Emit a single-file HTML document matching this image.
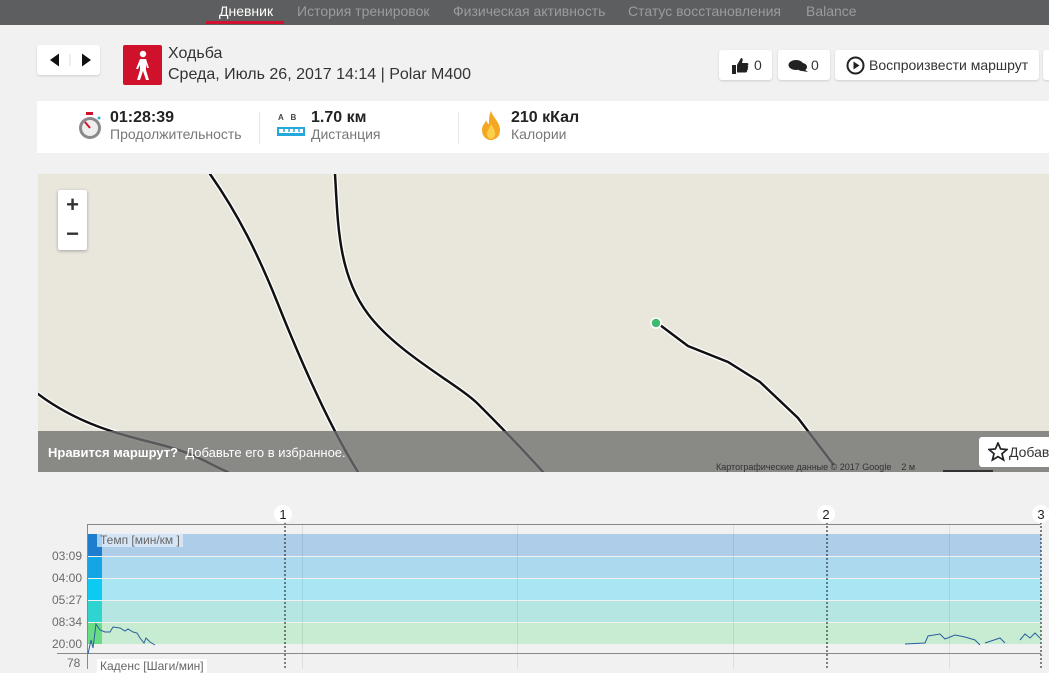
<!DOCTYPE html>
<html><head><meta charset="utf-8"><style>
*{margin:0;padding:0;box-sizing:border-box}
body{width:1049px;height:669px;overflow:hidden;background:#f1f1f1;font-family:"Liberation Sans",sans-serif;position:relative;color:#333}
.abs{position:absolute}
.nav{left:0;top:0;width:1049px;height:25px;background:#5d5e5f}
.nav span{position:absolute;top:3px;font-size:14px;color:#9b9c9d}
.btn{background:#fff;border-radius:3px;box-shadow:0 1px 2px rgba(0,0,0,.15);height:30px;top:50px;font-size:14px;color:#333}
.lbl{font-size:12px;color:#6b6b6b}
</style></head><body>
<div class="abs nav">
<span style="left:219px;color:#fff">Дневник</span>
<div class="abs" style="left:206px;top:21px;width:78px;height:3px;background:#d2102f"></div>
<span style="left:297px">История тренировок</span>
<span style="left:453px">Физическая активность</span>
<span style="left:628px">Статус восстановления</span>
<span style="left:806px">Balance</span>
</div>
<div class="abs btn" style="left:37px;top:45px;width:63px;height:30px">
<svg width="63" height="30"><path d="M13 15l9-6.5v13z" fill="#111"/><path d="M54 15l-9-6.5v13z" fill="#111"/><line x1="33" y1="9" x2="33" y2="21" stroke="#ddd"/></svg>
</div>
<div class="abs" style="left:123px;top:45px;width:39px;height:40px;background:#d0112b;border-radius:2px">
<svg width="39" height="40"><circle cx="20" cy="9" r="3.2" fill="#fff"/><path d="M17 14h6l3 9h-2l-1-4v6l3 10h-3l-3-9-3 9h-3l3-10v-5l-2 4h-2z" fill="#fff"/></svg>
</div>
<div class="abs" style="left:168px;top:45px;font-size:16px;color:#333">Ходьба</div>
<div class="abs" style="left:168px;top:66px;font-size:16px;color:#333">Среда, Июль 26, 2017 14:14 | Polar M400</div>
<div class="abs btn" style="left:719px;width:53px"><svg class="abs" style="left:12px;top:7px" width="18" height="17"><path d="M1 8h4v9H1z M6 8l4-7c2 0 2 2 1 5h5c1.5 0 2 2 0.5 2.5 1 .5 1 2 0 2.5 1 .5 .5 2-.5 2 .5 1 0 2.5-1.5 2.5H6z" fill="#222"/></svg><span class="abs" style="left:35px;top:7px">0</span></div>
<div class="abs btn" style="left:778px;width:52px"><svg class="abs" style="left:10px;top:9px" width="20" height="13"><ellipse cx="8" cy="6" rx="7.5" ry="5" fill="#222"/><ellipse cx="14" cy="8" rx="5" ry="4" fill="#222"/><path d="M16 10l4 3-6-1z" fill="#222"/></svg><span class="abs" style="left:33px;top:7px">0</span></div>
<div class="abs btn" style="left:835px;width:204px"><svg class="abs" style="left:11px;top:6px" width="19" height="19"><circle cx="9.5" cy="9.5" r="8" fill="none" stroke="#222" stroke-width="2"/><path d="M7.5 5.5v8l6-4z" fill="#222"/></svg><span class="abs" style="left:34px;top:7px">Воспроизвести маршрут</span></div>
<div class="abs btn" style="left:1043px;width:20px"></div>
<div class="abs" style="left:37px;top:101px;width:1012px;height:52px;background:#fff"></div>
<svg class="abs" style="left:76px;top:110px" width="28" height="32"><rect x="10" y="2" width="7" height="3" fill="#d0112b"/><circle cx="14" cy="18" r="11" fill="#8a8a8a"/><circle cx="14" cy="18" r="8" fill="#eee"/><line x1="14" y1="18" x2="9" y2="12" stroke="#d0112b" stroke-width="2"/><circle cx="23" cy="8" r="1.5" fill="#3ab0e0"/></svg>
<div class="abs" style="left:110px;top:109px;font-size:16px;font-weight:bold;color:#222">01:28:39</div>
<div class="abs" style="left:110px;top:126px;font-size:14px;color:#777">Продолжительность</div>
<div class="abs" style="left:259px;top:112px;width:1px;height:32px;background:#e6e6e6"></div>
<div class="abs" style="left:278px;top:113px;font-size:8px;font-weight:bold;color:#444">A&nbsp;&nbsp;&nbsp;B</div>
<svg class="abs" style="left:277px;top:127px" width="28" height="10"><rect width="28" height="9" fill="#23a8dc"/><rect x="2" y="2" width="24" height="4" fill="#fff"/><g stroke="#23a8dc" stroke-width="1.5"><line x1="7" y1="2" x2="7" y2="5"/><line x1="12" y1="2" x2="12" y2="5"/><line x1="17" y1="2" x2="17" y2="5"/><line x1="22" y1="2" x2="22" y2="5"/></g></svg>
<div class="abs" style="left:311px;top:109px;font-size:16px;font-weight:bold;color:#222">1.70 км</div>
<div class="abs" style="left:311px;top:126px;font-size:14px;color:#777">Дистанция</div>
<div class="abs" style="left:458px;top:112px;width:1px;height:32px;background:#e6e6e6"></div>
<svg class="abs" style="left:480px;top:110px" width="22" height="32"><path d="M11 1c2 7 9 11 9 19 0 6-4 10-9 10S2 26 2 20c0-5 3-6 4-10 1 3 2 4 3 4 0-5 0-9 2-13z" fill="#f5a623"/><path d="M11 14c2 4 5 7 4 11-1 3-3 4-4 4s-4-2-4-5c0-4 3-6 4-10z" fill="#fcd04a"/></svg>
<div class="abs" style="left:511px;top:109px;font-size:16px;font-weight:bold;color:#222">210 кКал</div>
<div class="abs" style="left:511px;top:126px;font-size:14px;color:#777">Калории</div>

<div class="abs" style="left:38px;top:174px;width:1011px;height:298px;background:#e9e6dc;overflow:hidden">
<svg class="abs" style="left:0;top:0" width="1011" height="298">
<g fill="none" stroke-linecap="round">
<g stroke="#fff" stroke-width="5">
<path d="M172 0 C200 40 220 80 240 130 S290 250 320 298"/>
<path d="M297 0 C300 50 300 100 330 140 S420 210 440 230 S480 270 505 298"/>
<path d="M0 220 C40 250 80 260 120 270 S170 290 190 298"/>
<path d="M618 148 L650 172 L690 188 L722 208 L760 244 L795 290"/>
</g>
<g stroke="#111" stroke-width="2.5">
<path d="M172 0 C200 40 220 80 240 130 S290 250 320 298"/>
<path d="M297 0 C300 50 300 100 330 140 S420 210 440 230 S480 270 505 298"/>
<path d="M0 220 C40 250 80 260 120 270 S170 290 190 298"/>
<path d="M618 148 L650 172 L690 188 L722 208 L760 244 L795 290"/>
</g></g>
<circle cx="618" cy="149" r="5" fill="#3fb870" stroke="#fff" stroke-width="1.5"/>
</svg>
<div class="abs" style="left:20px;top:16px;width:29px;height:60px;background:#fff;border-radius:2px;box-shadow:0 1px 3px rgba(0,0,0,.3);font-size:22px;font-weight:bold;color:#333;text-align:center;line-height:29px">+<br>−</div>
<div class="abs" style="left:0;top:257px;width:1011px;height:41px;background:rgba(110,110,110,.78)"></div>
<div class="abs" style="left:10px;top:271px;font-size:13px;color:#fff"><b>Нравится маршрут?</b>&nbsp; Добавьте его в избранное.</div>
<div class="abs" style="left:678px;top:288px;font-size:9px;color:#333">Картографические данные © 2017 Google&nbsp;&nbsp;&nbsp; 2 м</div>
<div class="abs" style="left:905px;top:296px;width:50px;height:2px;background:#333"></div>
<div class="abs" style="left:941px;top:263px;width:80px;height:30px;background:#fff;border-radius:3px;font-size:14px;padding:7px 0 0 30px">Добавить</div>
<svg class="abs" style="left:950px;top:268px" width="20" height="20"><path d="M10 1l2.6 6 6.4.5-5 4.2 1.6 6.3L10 14.6 4.4 18 6 11.7 1 7.5l6.4-.5z" fill="none" stroke="#222" stroke-width="1.7"/></svg>
</div>

<div class="abs" style="left:87px;top:524px;width:954px;height:145px;border-top:1px solid #888;border-left:1px solid #888;background:#f1f1f1"></div>
<div class="abs" style="left:88px;top:534px;width:953px;height:22px;background:#aecde9"></div>
<div class="abs" style="left:88px;top:557px;width:953px;height:21px;background:#acd9ee"></div>
<div class="abs" style="left:88px;top:579px;width:953px;height:21px;background:#a9e5f2"></div>
<div class="abs" style="left:88px;top:601px;width:953px;height:21px;background:#b6e6e2"></div>
<div class="abs" style="left:88px;top:623px;width:953px;height:21px;background:#c8ecd2"></div>
<div class="abs" style="left:88px;top:534px;width:14px;height:22px;background:#1d7ecf"></div>
<div class="abs" style="left:88px;top:557px;width:14px;height:21px;background:#14a6e4"></div>
<div class="abs" style="left:88px;top:579px;width:14px;height:21px;background:#0dcaf2"></div>
<div class="abs" style="left:88px;top:601px;width:14px;height:21px;background:#2fd3cf"></div>
<div class="abs" style="left:88px;top:623px;width:14px;height:21px;background:#6adc86"></div>
<div class="abs" style="left:302px;top:524px;width:1px;height:145px;background:rgba(0,0,0,.08)"></div>
<div class="abs" style="left:517px;top:524px;width:1px;height:145px;background:rgba(0,0,0,.08)"></div>
<div class="abs" style="left:733px;top:524px;width:1px;height:145px;background:rgba(0,0,0,.08)"></div>
<div class="abs" style="left:949px;top:524px;width:1px;height:145px;background:rgba(0,0,0,.08)"></div>
<div class="abs" style="left:57px;top:653px;width:984px;height:1px;background:#888"></div>
<div class="abs" style="left:97px;top:533px;background:rgba(230,240,250,.7);font-size:12px;color:#666;padding:0 3px">Темп [мин/км ]</div>
<div class="abs" style="left:97px;top:659px;background:#fff;font-size:12px;color:#666;padding:0 3px">Каденс [Шаги/мин]</div>
<div class="abs lbl" style="left:52px;top:549px">03:09</div>
<div class="abs lbl" style="left:52px;top:571px">04:00</div>
<div class="abs lbl" style="left:52px;top:593px">05:27</div>
<div class="abs lbl" style="left:52px;top:615px">08:34</div>
<div class="abs lbl" style="left:52px;top:637px">20:00</div>
<div class="abs lbl" style="left:67px;top:656px">78</div>
<svg class="abs" style="left:0;top:500px" width="1049" height="169">
<path d="M88 154 L91 140 L93 148 L96 124 L100 130 L105 132 L110 132 L113 127 L120 128 L125 131 L128 129 L133 132 L137 133 L140 138 L144 143 L146 138 L150 142 L155 145" fill="none" stroke="#2b5f9e" stroke-width="1"/>
<path d="M905 144 L925 143 L928 136 L940 134 L945 139 L955 135 L965 137 L975 140 L980 145 M985 143 L1000 138 L1005 143 M1020 140 L1025 134 L1030 138 L1035 133 L1040 138" fill="none" stroke="#2b5f9e" stroke-width="1"/>
<g stroke="#111" stroke-dasharray="2,2"><line x1="285" y1="22" x2="285" y2="169"/><line x1="827" y1="22" x2="827" y2="169"/><line x1="1041" y1="22" x2="1041" y2="169"/></g>
<g fill="#fff"><circle cx="283" cy="14" r="9"/><circle cx="826" cy="14" r="9"/><circle cx="1041" cy="14" r="9"/></g>
<g font-size="13" fill="#222" font-family="Liberation Sans" text-anchor="middle"><text x="283" y="19">1</text><text x="826" y="19">2</text><text x="1041" y="19">3</text></g>
</svg>
</body></html>
